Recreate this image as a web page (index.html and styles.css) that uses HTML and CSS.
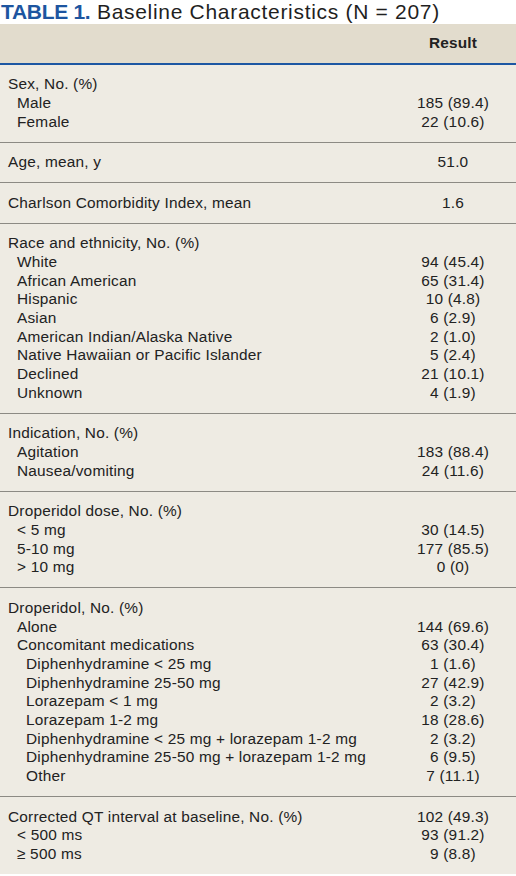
FILE: index.html
```html
<!DOCTYPE html>
<html lang="en">
<head>
    <meta charset="UTF-8">
    <meta name="viewport" content="width=device-width, initial-scale=1.0">
    <title>Table 1. Baseline Characteristics</title>
    <link rel="stylesheet" href="styles.css">
</head>
<body>

    <h1 class="titulo"><span class="numero">TABLE 1.</span> Baseline Characteristics (N = 207)</h1>

    <div class="tabla">
        <div class="cabecera">
            <div class="etiqueta"></div>
            <div class="valor">Result</div>
        </div>

        <!-- Sexo -->
        <div class="grupo">
            <div class="fila"><div class="etiqueta">Sex, No. (%)</div><div class="valor"></div></div>
            <div class="fila"><div class="etiqueta sub">Male</div><div class="valor">185 (89.4)</div></div>
            <div class="fila"><div class="etiqueta sub">Female</div><div class="valor">22 (10.6)</div></div>
        </div>

        <div class="grupo">
            <div class="fila"><div class="etiqueta">Age, mean, y</div><div class="valor">51.0</div></div>
        </div>

        <div class="grupo">
            <div class="fila"><div class="etiqueta">Charlson Comorbidity Index, mean</div><div class="valor">1.6</div></div>
        </div>

        <!-- Raza -->
        <div class="grupo">
            <div class="fila"><div class="etiqueta">Race and ethnicity, No. (%)</div><div class="valor"></div></div>
            <div class="fila"><div class="etiqueta sub">White</div><div class="valor">94 (45.4)</div></div>
            <div class="fila"><div class="etiqueta sub">African American</div><div class="valor">65 (31.4)</div></div>
            <div class="fila"><div class="etiqueta sub">Hispanic</div><div class="valor">10 (4.8)</div></div>
            <div class="fila"><div class="etiqueta sub">Asian</div><div class="valor">6 (2.9)</div></div>
            <div class="fila"><div class="etiqueta sub">American Indian/Alaska Native</div><div class="valor">2 (1.0)</div></div>
            <div class="fila"><div class="etiqueta sub">Native Hawaiian or Pacific Islander</div><div class="valor">5 (2.4)</div></div>
            <div class="fila"><div class="etiqueta sub">Declined</div><div class="valor">21 (10.1)</div></div>
            <div class="fila"><div class="etiqueta sub">Unknown</div><div class="valor">4 (1.9)</div></div>
        </div>

        <div class="grupo">
            <div class="fila"><div class="etiqueta">Indication, No. (%)</div><div class="valor"></div></div>
            <div class="fila"><div class="etiqueta sub">Agitation</div><div class="valor">183 (88.4)</div></div>
            <div class="fila"><div class="etiqueta sub">Nausea/vomiting</div><div class="valor">24 (11.6)</div></div>
        </div>

        <div class="grupo">
            <div class="fila"><div class="etiqueta">Droperidol dose, No. (%)</div><div class="valor"></div></div>
            <div class="fila"><div class="etiqueta sub">&lt; 5 mg</div><div class="valor">30 (14.5)</div></div>
            <div class="fila"><div class="etiqueta sub">5-10 mg</div><div class="valor">177 (85.5)</div></div>
            <div class="fila"><div class="etiqueta sub">&gt; 10 mg</div><div class="valor">0 (0)</div></div>
        </div>

        <!-- Droperidol y medicación concomitante -->
        <div class="grupo">
            <div class="fila"><div class="etiqueta">Droperidol, No. (%)</div><div class="valor"></div></div>
            <div class="fila"><div class="etiqueta sub">Alone</div><div class="valor">144 (69.6)</div></div>
            <div class="fila"><div class="etiqueta sub">Concomitant medications</div><div class="valor">63 (30.4)</div></div>
            <div class="fila"><div class="etiqueta subsub">Diphenhydramine &lt; 25 mg</div><div class="valor">1 (1.6)</div></div>
            <div class="fila"><div class="etiqueta subsub">Diphenhydramine 25-50 mg</div><div class="valor">27 (42.9)</div></div>
            <div class="fila"><div class="etiqueta subsub">Lorazepam &lt; 1 mg</div><div class="valor">2 (3.2)</div></div>
            <div class="fila"><div class="etiqueta subsub">Lorazepam 1-2 mg</div><div class="valor">18 (28.6)</div></div>
            <div class="fila"><div class="etiqueta subsub">Diphenhydramine &lt; 25 mg + lorazepam 1-2 mg</div><div class="valor">2 (3.2)</div></div>
            <div class="fila"><div class="etiqueta subsub">Diphenhydramine 25-50 mg + lorazepam 1-2 mg</div><div class="valor">6 (9.5)</div></div>
            <div class="fila"><div class="etiqueta subsub">Other</div><div class="valor">7 (11.1)</div></div>
        </div>

        <div class="grupo ultimo">
            <div class="fila"><div class="etiqueta">Corrected QT interval at baseline, No. (%)</div><div class="valor">102 (49.3)</div></div>
            <div class="fila"><div class="etiqueta sub">&lt; 500 ms</div><div class="valor">93 (91.2)</div></div>
            <div class="fila"><div class="etiqueta sub">&ge; 500 ms</div><div class="valor">9 (8.8)</div></div>
        </div>
    </div>

</body>
</html>
```

FILE: styles.css
```css
/* Estilos básicos */
body {
    font-family: "Liberation Sans", Arial, sans-serif;
    margin: 0;
    padding: 0;
    background-color: #ffffff;
    color: #222222;
}

/* Título de la tabla */
.titulo {
    margin: 0;
    padding-left: 1px;
    height: 24px;
    font-size: 21px;
    font-weight: normal;
    line-height: 24px;
    letter-spacing: 0.7px;
    color: #1f1f1f;
    white-space: nowrap;
}

.numero {
    color: #1d55a0;
    font-weight: bold;
    letter-spacing: -0.3px;
}

.tabla {
    background-color: #eeebe3;
    font-size: 15.4px;
    letter-spacing: 0.2px;
    line-height: 18.7px;
}

.cabecera {
    display: flex;
    align-items: center;
    height: 39px;
    background-color: #e2dccd;
    border-bottom: 2px solid #1d57a3;
    font-weight: bold;
}

.grupo {
    padding: 10.4px 0;
    border-bottom: 1px solid #8c8a84;
}

.grupo.ultimo {
    border-bottom: none;
}

.fila {
    display: flex;
}

.etiqueta {
    flex: 1;
    padding-left: 8px;
    white-space: nowrap;
}

.etiqueta.sub {
    padding-left: 17px;
}

.etiqueta.subsub {
    padding-left: 26px;
}

.valor {
    width: 126px;
    text-align: center;
}
```
